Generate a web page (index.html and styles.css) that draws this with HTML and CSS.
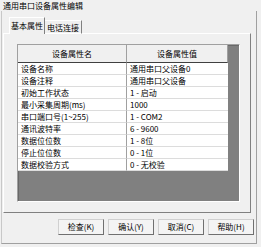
FILE: index.html
```html
<!DOCTYPE html>
<html lang="zh-CN">
<head>
<meta charset="UTF-8">
<title>通用串口设备属性编辑</title>
<link rel="stylesheet" href="styles.css">
</head>
<body>
<div class="window">
	<div class="caption">通用串口设备属性编辑</div>
	<div class="frame">
		<div class="tabs">
			<span class="tab active">基本属性</span>
			<span class="tab">电话连接</span>
		</div>
		<div class="panel">
			<div class="sheet">
				<div class="hd">设备属性名</div><div class="hd">设备属性值</div>
				<div class="cell name">设备名称</div><div class="cell">通用串口父设备0</div>
				<div class="cell name">设备注释</div><div class="cell">通用串口父设备</div>
				<div class="cell name">初始工作状态</div><div class="cell">1 - 启动</div>
				<div class="cell name">最小采集周期(ms)</div><div class="cell">1000</div>
				<div class="cell name">串口端口号(1~255)</div><div class="cell">1 - COM2</div>
				<div class="cell name">通讯波特率</div><div class="cell">6 - 9600</div>
				<div class="cell name">数据位位数</div><div class="cell">1 - 8位</div>
				<div class="cell name">停止位位数</div><div class="cell">0 - 1位</div>
				<div class="cell name">数据校验方式</div><div class="cell">0 - 无校验</div>
			</div>
		</div>
		<div class="buttons">
			<span class="btn">检查(K)</span>
			<span class="btn">确认(Y)</span>
			<span class="btn">取消(C)</span>
			<span class="btn">帮助(H)</span>
		</div>
	</div>
</div>
</body>
</html>
```

FILE: styles.css
```css
body {
	margin: 0;
	background: #f0f0f0;
	font-family: "Noto Sans CJK SC", "DejaVu Sans", sans-serif;
	font-size: 8px;
	color: #000;
}
.window {
	width: 261px;
	height: 247px;
}
.caption {
	height: 11px;
	line-height: 12px;
	padding-left: 3px;
}
.frame {
	box-sizing: border-box;
	margin-left: 1px;
	width: 256px;
	height: 233px;
	border-left: 1px solid #c8c8c8;
	border-right: 1px solid #a0a0a0;
	border-bottom: 1px solid #a0a0a0;
	padding: 7px 2px 0 1px;
}
.tabs {
	display: flex;
	align-items: flex-end;
	height: 16px;
	padding-left: 6px;
	position: relative;
	z-index: 1;
	margin-bottom: -1px;
}
.tab {
	box-sizing: border-box;
	height: 14px;
	width: 37px;
	line-height: 13px;
	text-align: center;
	border-top: 1px solid #ffffff;
	border-right: 1px solid #808080;
	border-bottom: 1px solid #ffffff;
}
.tab.active {
	height: 17px;
	width: 36px;
	line-height: 16px;
	background: #f0f0f0;
	border-left: 1px solid #ffffff;
	border-bottom: none;
}
.panel {
	box-sizing: border-box;
	width: 248px;
	height: 180px;
	border: 1px solid;
	border-color: #ffffff #808080 #808080 #ffffff;
	padding: 10px 10px 10px 13px;
}
.sheet {
	box-sizing: border-box;
	width: 223px;
	height: 158px;
	display: grid;
	grid-template-columns: 109px 101px;
	grid-template-rows: 18px;
	grid-auto-rows: 12px;
	align-content: start;
	background: #808080;
	border: 1px solid;
	border-color: #a0a0a0 #ffffff #ffffff #a0a0a0;
	box-shadow: inset 1px 1px #696969;
}
.hd {
	background: #f0f0f0;
	text-align: center;
	line-height: 17px;
	border-right: 1px solid #a0a0a0;
	border-bottom: 1px solid #404040;
}
.cell {
	background: #ffffff;
	padding-left: 3px;
	line-height: 11px;
	white-space: nowrap;
	overflow: hidden;
	border-bottom: 1px solid #dcdcdc;
}
.cell.name {
	border-right: 1px solid #a0a0a0;
}
.buttons {
	display: flex;
	justify-content: flex-end;
	gap: 4px;
	margin-top: 6px;
}
.btn {
	box-sizing: border-box;
	width: 46px;
	height: 16px;
	line-height: 14px;
	text-align: center;
	background: #f4f4f4;
	border: 1px solid;
	border-color: #d0d0d0 #707070 #707070 #d0d0d0;
}
```
